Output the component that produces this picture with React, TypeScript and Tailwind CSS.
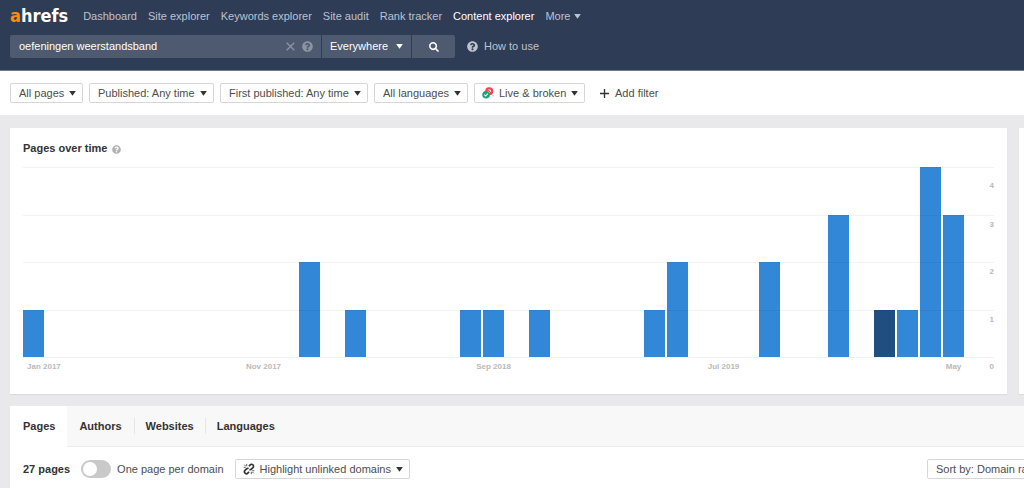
import React from "react";
import { FaQuestionCircle, FaSearch } from "react-icons/fa";

const navItems = [
  "Dashboard",
  "Site explorer",
  "Keywords explorer",
  "Site audit",
  "Rank tracker",
  "Content explorer",
];

const pagesPerMonth = [
  1, 0, 0, 0, 0, 0, 0, 0, 0, 0, 0, 0, 2, 0, 1, 0, 0, 0, 0, 1, 1, 0, 1, 0, 0, 0,
  0, 1, 2, 0, 0, 0, 2, 0, 0, 3, 0, 1, 1, 4, 3,
];
const selectedMonth = 37;
const maxPages = 4;

function Caret({ className = "" }: { className?: string }) {
  return (
    <svg viewBox="0 0 8 6" className={`h-[5px] w-[7px] fill-current ${className}`} aria-hidden="true">
      <path d="M0 0h8L4 5.6z" />
    </svg>
  );
}

function Dropdown({ label, value, icon }: { label: string; value: string; icon?: React.ReactNode }) {
  return (
    <div className="relative flex shrink-0 items-center">
      {icon && <span className="pointer-events-none absolute left-2 flex">{icon}</span>}
      <select
        aria-label={label}
        className={`h-5 appearance-none rounded-xs border border-[#d6d6d6] bg-white pr-[17px] text-[11px] leading-4 text-[#4d4d4d] ${icon ? "pl-6" : "pl-2"}`}
      >
        <option>{value}</option>
      </select>
      <Caret className="pointer-events-none absolute right-[7px] text-[#333]" />
    </div>
  );
}

function LiveBrokenIcon() {
  return (
    <svg viewBox="0 0 12 12" className="size-3" aria-hidden="true">
      <circle cx="7.2" cy="4.3" r="3" fill="none" stroke="#fb3b46" strokeWidth="2" />
      <path d="M5.2 2.6l4.4 3.8" stroke="#fb3b46" strokeWidth="1.2" />
      <path d="M10.6 7.8l.8 1.8" stroke="#8ed8b8" strokeWidth="1" />
      <circle cx="4.1" cy="7.7" r="3.8" fill="#17a673" />
      <path d="M2.3 7.7l1.4 1.3 2.3-2.5" fill="none" stroke="#fff" strokeWidth="1.1" />
    </svg>
  );
}

function UnlinkedIcon() {
  return (
    <svg viewBox="0 0 12 12" className="size-3 stroke-[#333]" fill="none" aria-hidden="true">
      <path d="M5.9 3.3l1.3-1.4a1.9 1.9 0 0 1 2.8 2.7L8.5 6.1a1.9 1.9 0 0 1-2.1.4" strokeWidth="1.6" />
      <path d="M6.1 8.7l-1.3 1.4A1.9 1.9 0 0 1 2 7.4l1.5-1.5a1.9 1.9 0 0 1 2.1-.4" strokeWidth="1.6" />
      <path d="M3.7 3.1V.9M2.9 3.3L1.3 1.7M2.7 4.3H.6M8.3 8.9v2.2M9.1 8.7l1.6 1.6M9.3 7.7h2.1" strokeWidth=".8" />
    </svg>
  );
}

function Header() {
  return (
    <header className="border-b border-[#6f7890] bg-[#2f3c56] px-[10px] pb-3 text-[11px]">
      <nav className="flex h-[34px] items-center gap-[11px] pb-[2px] text-[#bcc2ce]">
        <a
          href="#"
          className="mr-1 font-['DejaVu_Sans_Condensed','DejaVu_Sans',sans-serif] text-[18px] leading-5 font-bold text-white"
        >
          <span className="text-[#ff8c0a]">a</span>hrefs
        </a>
        {navItems.map((item) => (
          <a
            key={item}
            href="#"
            className={`whitespace-nowrap ${item === "Content explorer" ? "text-white" : ""}`}
          >
            {item}
          </a>
        ))}
        <button type="button" className="flex items-center gap-1">
          More <Caret className="mt-px h-[4px] w-[6px]" />
        </button>
      </nav>
      <div className="mt-px flex items-center">
        <form className="flex gap-px overflow-hidden rounded-xs" onSubmit={(e) => e.preventDefault()}>
          <div className="flex h-[23px] w-[311px] items-center bg-[#4e5a70] pr-2 pl-[9px]">
            <input
              aria-label="Search query"
              defaultValue="oefeningen weerstandsband"
              className="min-w-0 flex-1 bg-transparent text-white outline-none"
            />
            <button type="button" aria-label="Clear" className="mr-[7px] text-[#8b94a4]">
              <svg viewBox="0 0 10 10" className="size-[9px] stroke-current" fill="none" strokeWidth="1.5">
                <path d="M.8.8l8.4 8.4M9.2.8L.8 9.2" />
              </svg>
            </button>
            <button type="button" aria-label="Search help" className="text-[#8b94a4]">
              <FaQuestionCircle className="size-[11px]" />
            </button>
          </div>
          <div className="relative flex items-center bg-[#4e5a70]">
            <select
              aria-label="Search in"
              className="h-[23px] appearance-none bg-transparent pr-[22px] pl-2 text-white"
            >
              <option>Everywhere</option>
            </select>
            <Caret className="pointer-events-none absolute right-2 text-white" />
          </div>
          <button
            type="submit"
            aria-label="Search"
            className="flex h-[23px] w-[43px] items-center justify-center bg-[#4e5a70] text-white"
          >
            <FaSearch className="size-[10px]" />
          </button>
        </form>
        <a href="#" className="ml-3 flex items-center gap-[6px] text-[#bcc2ce]">
          <FaQuestionCircle className="size-[11px]" /> How to use
        </a>
      </div>
    </header>
  );
}

function Filters() {
  return (
    <div className="flex h-11 items-center gap-[6px] bg-white px-[10px]">
      <Dropdown label="Pages" value="All pages" />
      <Dropdown label="Published" value="Published: Any time" />
      <Dropdown label="First published" value="First published: Any time" />
      <Dropdown label="Languages" value="All languages" />
      <Dropdown label="Status" value="Live & broken" icon={<LiveBrokenIcon />} />
      <button type="button" className="ml-[9px] flex items-center gap-[6px] text-[11px] text-[#4d4d4d]">
        <svg viewBox="0 0 10 10" className="size-[9px] stroke-[#333]" strokeWidth="1.5" aria-hidden="true">
          <path d="M5 0v10M0 5h10" />
        </svg>
        Add filter
      </button>
    </div>
  );
}

function PagesChart() {
  return (
    <section className="min-w-0 flex-1 bg-white px-[13px] pt-3 pb-[21px] shadow-[0_1px_1px_rgba(0,0,0,0.06)]">
      <h2 className="flex h-4 items-center gap-[5px] text-[11px] font-bold text-[#333]">
        Pages over time
        <FaQuestionCircle className="mt-[2px] size-[9px] text-[#b0b0b0]" />
      </h2>
      <div className="relative mt-[11px] h-[190px] pr-[30px]">
        <div className="grid h-full grid-cols-[repeat(41,minmax(0,1fr))] items-end gap-[2px]">
          {pagesPerMonth.map((count, month) => (
            <div
              key={month}
              className={month === selectedMonth ? "bg-[#204e80]" : "bg-[#3387d7]"}
              style={{ height: `${(count / maxPages) * 100}%` }}
            />
          ))}
        </div>
        <div className="pointer-events-none absolute inset-0 grid grid-rows-[repeat(4,minmax(0,1fr))_0px] text-right text-[8px] leading-[10px] font-bold text-[#b9b9b9]">
          <div className="border-t border-black/5 pt-[13px]">4</div>
          <div className="border-t border-black/5 pt-1">3</div>
          <div className="border-t border-black/5 pt-1">2</div>
          <div className="border-t border-black/5 pt-1">1</div>
          <div className="h-4 border-t border-black/5 pt-1">0</div>
        </div>
      </div>
      <div className="mt-1 grid grid-cols-[repeat(41,minmax(0,1fr))] gap-[2px] pr-[30px] text-[8px] leading-3 font-bold whitespace-nowrap text-[#b9b9b9]">
        <span className="col-start-1 pl-1">Jan 2017</span>
        <span className="col-start-11 flex justify-center">Nov 2017</span>
        <span className="col-start-21 flex justify-center">Sep 2018</span>
        <span className="col-start-31 flex justify-center">Jul 2019</span>
        <span className="col-start-41 flex justify-center">May</span>
      </div>
    </section>
  );
}

function Results() {
  return (
    <section className="mt-3 ml-[10px] bg-white">
      <div role="tablist" className="flex h-[41px] bg-[#f8f8f8] text-[11px] font-bold text-[#333]">
        <button type="button" role="tab" aria-selected="true" className="bg-white pr-3 pl-[13px]">
          Pages
        </button>
        <div className="flex flex-1 items-center border-b border-[#ececec]">
          <button type="button" role="tab" className="h-4 border-r border-[#e6e6e6] px-3">
            Authors
          </button>
          <button type="button" role="tab" className="h-4 border-r border-[#e6e6e6] px-[11px]">
            Websites
          </button>
          <button type="button" role="tab" className="h-4 px-[11px]">
            Languages
          </button>
        </div>
      </div>
      <div className="flex items-center overflow-hidden py-3 pl-[13px] text-[11px] whitespace-nowrap text-[#4d4d4d]">
        <strong className="text-[#333]">27 pages</strong>
        <label className="mx-[11px] flex items-center gap-[6px]">
          <input
            type="checkbox"
            role="switch"
            className="h-[18px] w-[30px] appearance-none rounded-full bg-[#c9c9c9] p-[2px] before:block before:size-[14px] before:rounded-full before:bg-white checked:bg-[#3387d7] checked:before:ml-3"
          />
          One page per domain
        </label>
        <Dropdown label="Highlight" value="Highlight unlinked domains" icon={<UnlinkedIcon />} />
        <div className="-mr-10 ml-auto">
          <Dropdown label="Sort order" value="Sort by: Domain rating" />
        </div>
      </div>
    </section>
  );
}

export default function App() {
  return (
    <div className="min-h-screen overflow-hidden bg-[#e9e9eb] font-['Liberation_Sans',Arial,sans-serif]">
      <Header />
      <Filters />
      <main>
        <div className="mt-[13px] flex gap-3 pl-[10px]">
          <PagesChart />
          <aside className="w-[5px] bg-white shadow-[0_1px_1px_rgba(0,0,0,0.06)]" />
        </div>
        <Results />
      </main>
    </div>
  );
}
